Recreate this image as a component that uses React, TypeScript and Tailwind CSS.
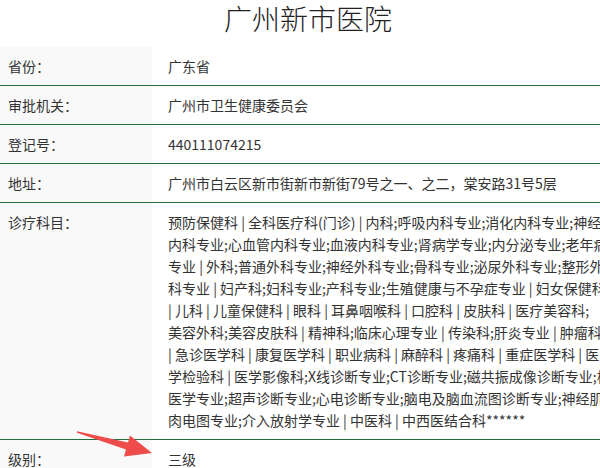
import React from "react";

const rows: { label: string; lines: string[] }[] = [
  { label: "省份：", lines: ["广东省"] },
  { label: "审批机关：", lines: ["广州市卫生健康委员会"] },
  { label: "登记号：", lines: ["440111074215"] },
  { label: "地址：", lines: ["广州市白云区新市街新市新街79号之一、之二，棠安路31号5层"] },
  {
    label: "诊疗科目：",
    lines: [
      "预防保健科 | 全科医疗科(门诊) | 内科;呼吸内科专业;消化内科专业;神经",
      "内科专业;心血管内科专业;血液内科专业;肾病学专业;内分泌专业;老年病学",
      "专业 | 外科;普通外科专业;神经外科专业;骨科专业;泌尿外科专业;整形外",
      "科专业 | 妇产科;妇科专业;产科专业;生殖健康与不孕症专业 | 妇女保健科",
      "| 儿科 | 儿童保健科 | 眼科 | 耳鼻咽喉科 | 口腔科 | 皮肤科 | 医疗美容科;",
      "美容外科;美容皮肤科 | 精神科;临床心理专业 | 传染科;肝炎专业 | 肿瘤科",
      "| 急诊医学科 | 康复医学科 | 职业病科 | 麻醉科 | 疼痛科 | 重症医学科 | 医",
      "学检验科 | 医学影像科;X线诊断专业;CT诊断专业;磁共振成像诊断专业;核",
      "医学专业;超声诊断专业;心电诊断专业;脑电及脑血流图诊断专业;神经肌",
      "肉电图专业;介入放射学专业 | 中医科 | 中西医结合科******",
    ],
  },
  { label: "级别：", lines: ["三级"] },
];

export default function App() {
  return (
    <div
      className="relative w-[600px] h-[468px] overflow-hidden bg-white text-[#333]"
      style={{ fontFamily: '"Noto Sans CJK SC", "Microsoft YaHei", sans-serif' }}
    >
      <div className="h-[47px] pl-4 text-center text-[28px] font-light leading-[36px] text-[#222]">
        广州新市医院
      </div>
      <div className="flex flex-col">
        {rows.map((r, i) => (
          <div
            key={r.label}
            className={
              i < rows.length - 1
                ? "flex border-b border-[#1f6f3f]"
                : "flex"
            }
          >
            <div className="w-[152px] shrink-0 bg-[#f9f9f9] py-2 pl-2 text-[14px] leading-[22px]">
              {r.label}
            </div>
            <div className="min-w-0 flex-1 overflow-hidden py-2 pl-4 text-[14px] leading-[22px]">
              {r.lines.map((l, j) => (
                <div key={j} className="whitespace-nowrap">
                  {l}
                </div>
              ))}
            </div>
          </div>
        ))}
      </div>
      <svg
        className="absolute left-0 top-0"
        width="600"
        height="468"
        viewBox="0 0 600 468"
      >
        <polygon
          points="77,431.2 128,442.6 130,435.4 152,453 124,456.6 126,449.4 77,432.8"
          fill="#ee4b4b"
        />
      </svg>
    </div>
  );
}
